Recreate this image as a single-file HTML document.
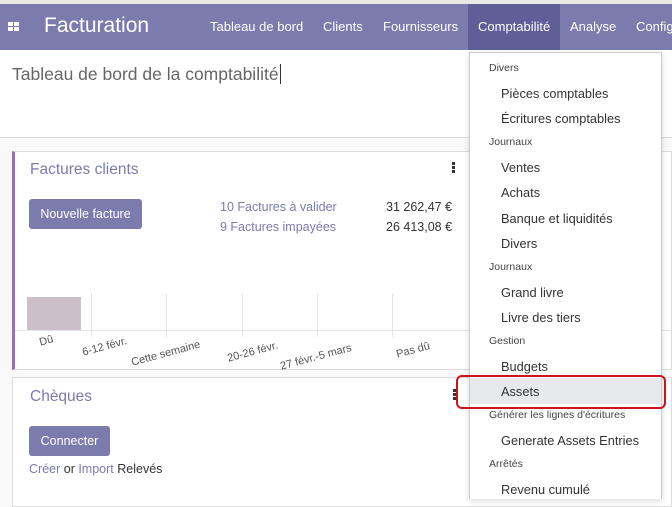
<!DOCTYPE html>
<html><head><meta charset="utf-8"><style>
*{box-sizing:border-box;margin:0;padding:0}
body{width:672px;height:499px;overflow:hidden;background:#f9f9f9;font-family:"Liberation Sans",sans-serif;position:relative;color:#4c4c4c}
.top{position:absolute;left:0;top:0;width:672px;height:4px;background:#ebe9e6}
.nav{position:absolute;left:0;top:4px;width:672px;height:46px;background:#7c7bad;color:#fff;overflow:hidden}
.nav .t{position:absolute;left:44px;top:10px;font-size:21px}
.nav .m{position:absolute;top:15px;font-size:13px;white-space:nowrap}
.act{position:absolute;left:468px;top:0;width:92px;height:46px;background:#5f5e97}
.cp{position:absolute;left:0;top:50px;width:672px;height:88px;background:#fff;border-bottom:1px solid #ddd}
.cp span{position:absolute;left:12px;top:14px;font-size:17.5px;color:#666}
.card{position:absolute;background:#fff;border:1px solid #ddd;overflow:hidden}
.ttl{position:absolute;color:#7c7bad;font-size:15.5px}
.btn{position:absolute;background:#7c7bad;color:#fff;font-size:12.5px;border-radius:3px;text-align:center}
.lnk{color:#7c7bad}
.dd{position:absolute;left:469px;top:52px;width:193px;height:447px;background:#fff;border:1px solid #ccc;border-bottom:none;box-shadow:0 2px 6px rgba(0,0,0,.15)}
.dd div{position:absolute;left:0;width:100%;white-space:nowrap}
.h{font-size:10.5px;color:#444;padding-left:19px}
.i{font-size:12.8px;color:#333;padding-left:31px}
.g{position:absolute;top:293px;width:1px;height:44px;background:#e5e5e5}
.lb{position:absolute;font-size:11px;color:#555;transform-origin:left top;white-space:nowrap}
.dots{position:absolute;width:3px}
.dots i{display:block;width:3px;height:3px;background:#333;margin-bottom:1px}
</style></head><body>
<div class="top"></div>
<div class="nav">
<div class="act"></div>
<svg style="position:absolute;left:8px;top:18px" width="11" height="9"><rect x="0" y="0" width="5" height="4" fill="#fff"/><rect x="6" y="0" width="5" height="4" fill="#fff"/><rect x="0" y="5" width="5" height="4" fill="#fff"/><rect x="6" y="5" width="5" height="4" fill="#fff"/></svg>
<div class="t">Facturation</div>
<div class="m" style="left:210px">Tableau de bord</div>
<div class="m" style="left:323px">Clients</div>
<div class="m" style="left:383px">Fournisseurs</div>
<div class="m" style="left:478px">Comptabilité</div>
<div class="m" style="left:570px">Analyse</div>
<div class="m" style="left:636px">Configuration</div>
</div>
<div class="cp"><span>Tableau de bord de la comptabilité<span style="position:static;border-left:1px solid #333;margin-left:1px"></span></span></div>

<div class="card" style="left:12px;top:151px;width:660px;height:219px;border-left:3px solid #9b6cc0">
<div class="ttl" style="left:15px;top:9px">Factures clients</div>
<div class="dots" style="left:437px;top:10px"><i></i><i></i><i></i></div>
<div class="btn" style="left:14px;top:47px;width:113px;height:30px;line-height:30px">Nouvelle facture</div>
<div class="lnk" style="position:absolute;left:205px;top:48px;font-size:12.5px">10 Factures à valider</div>
<div class="lnk" style="position:absolute;left:205px;top:68px;font-size:12.5px">9 Factures impayées</div>
<div style="position:absolute;left:371px;top:48px;font-size:12.5px;color:#333">31 262,47 €</div>
<div style="position:absolute;left:371px;top:68px;font-size:12.5px;color:#333">26 413,08 €</div>
</div>
<div style="position:absolute;left:27px;top:297px;width:54px;height:33px;background:#cbbfc9"></div>
<div style="position:absolute;left:15px;top:330px;width:657px;height:1px;background:#e5e5e5"></div>
<div class="g" style="left:91px"></div><div class="g" style="left:166px"></div><div class="g" style="left:242px"></div><div class="g" style="left:317px"></div><div class="g" style="left:392px"></div>
<div class="lb" style="left:38px;top:337px;transform:rotate(-15deg)">Dû</div>
<div class="lb" style="left:81px;top:347px;transform:rotate(-15deg)">6-12 févr.</div>
<div class="lb" style="left:130px;top:357px;transform:rotate(-15deg)">Cette semaine</div>
<div class="lb" style="left:226px;top:353px;transform:rotate(-15deg)">20-26 févr.</div>
<div class="lb" style="left:279px;top:361px;transform:rotate(-15deg)">27 févr.-5 mars</div>
<div class="lb" style="left:395px;top:349px;transform:rotate(-15deg)">Pas dû</div>

<div class="card" style="left:12px;top:377px;width:660px;height:130px">
<div class="ttl" style="left:17px;top:10px">Chèques</div>
<div class="dots" style="left:440px;top:11px"><i></i><i></i><i></i></div>
<div class="btn" style="left:16px;top:48px;width:81px;height:30px;line-height:30px">Connecter</div>
<div style="position:absolute;left:16px;top:84px;font-size:12.5px;color:#333"><span class="lnk">Créer</span> or <span class="lnk">Import</span> Relevés</div>
</div>

<div class="dd">
<div class="h" style="top:9px">Divers</div>
<div class="i" style="top:33px">Pièces comptables</div>
<div class="i" style="top:58px">Écritures comptables</div>
<div class="h" style="top:83px">Journaux</div>
<div class="i" style="top:107px">Ventes</div>
<div class="i" style="top:132px">Achats</div>
<div class="i" style="top:158px">Banque et liquidités</div>
<div class="i" style="top:183px">Divers</div>
<div class="h" style="top:208px">Journaux</div>
<div class="i" style="top:232px">Grand livre</div>
<div class="i" style="top:257px">Livre des tiers</div>
<div class="h" style="top:282px">Gestion</div>
<div class="i" style="top:306px">Budgets</div>
<div style="top:325px;height:26px;background:#e8e9eb"></div>
<div class="i" style="top:331px">Assets</div>
<div class="h" style="top:356px">Générer les lignes d'écritures</div>
<div class="i" style="top:380px">Generate Assets Entries</div>
<div class="h" style="top:405px">Arrêtés</div>
<div class="i" style="top:429px">Revenu cumulé</div>
</div>
<div style="position:absolute;left:456px;top:375px;width:210px;height:34px;border:2.5px solid #d0121b;border-radius:6px"></div>
</body></html>
